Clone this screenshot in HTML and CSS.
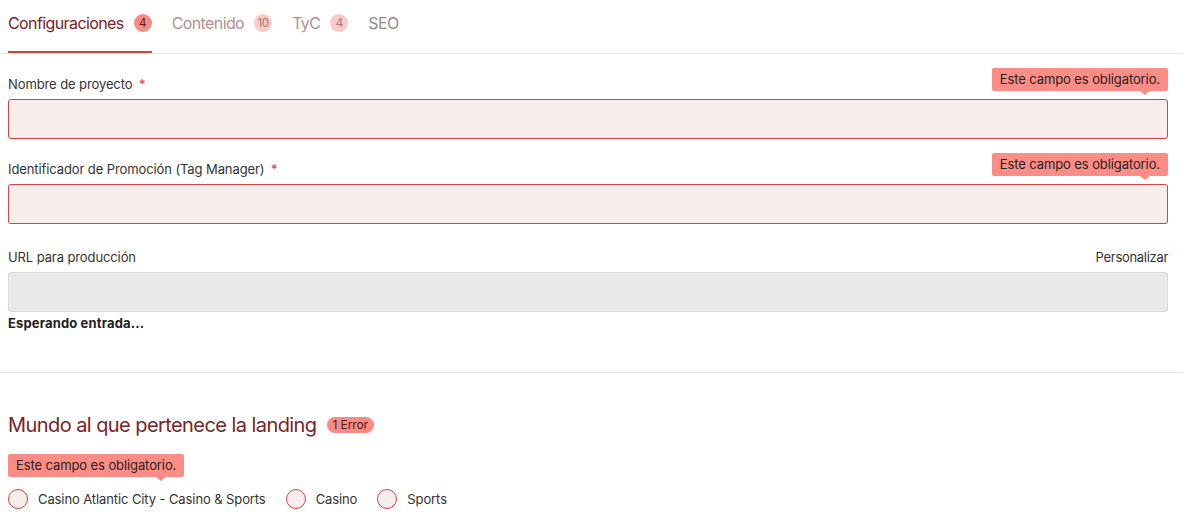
FILE: index.html
```html
<!DOCTYPE html>
<html lang="es">
<head>
<meta charset="utf-8">
<title>Configuraciones</title>
<link rel="stylesheet" href="styles.css">
</head>
<body>
<nav class="tabs">
  <div class="tab active">Configuraciones <span class="badge badge-strong">4</span></div>
  <div class="tab muted">Contenido <span class="badge badge-soft">10</span></div>
  <div class="tab muted">TyC <span class="badge badge-soft">4</span></div>
  <div class="tab grey">SEO</div>
</nav>

<section class="section first">
  <div class="field">
    <div class="field-head">
      <label class="label">Nombre de proyecto <span class="req">*</span></label>
      <span class="tip tip-right">Este campo es obligatorio.</span>
    </div>
    <div class="input error"></div>
  </div>

  <div class="field">
    <div class="field-head">
      <label class="label">Identificador de Promoción (Tag Manager) <span class="req">*</span></label>
      <span class="tip tip-right">Este campo es obligatorio.</span>
    </div>
    <div class="input error"></div>
  </div>

  <div class="field url-field">
    <div class="field-head">
      <label class="label">URL para producción</label>
      <span class="link">Personalizar</span>
    </div>
    <div class="input disabled"></div>
    <div class="hint">Esperando entrada...</div>
  </div>
</section>

<section class="section second">
  <h2 class="heading">Mundo al que pertenece la landing <span class="err-badge">1 Error</span></h2>
  <div class="tip-row"><span class="tip">Este campo es obligatorio.</span></div>
  <div class="radios">
    <label class="radio"><span class="dot"></span>Casino Atlantic City - Casino &amp; Sports</label>
    <label class="radio"><span class="dot"></span>Casino</label>
    <label class="radio"><span class="dot"></span>Sports</label>
  </div>
</section>
</body>
</html>
```

FILE: styles.css
```css
* { box-sizing: border-box; }
html, body { margin: 0; padding: 0; background: #fff; }
body {
  font-family: Inter, "Noto Sans", "Liberation Sans", sans-serif;
  color: #333;
  width: 1183px;
  overflow: hidden;
}

.tabs {
  display: flex;
  gap: 20px;
  padding: 0 8px;
  border-bottom: 1px solid #e4e4e4;
  height: 54px;
}
.tab {
  display: flex;
  align-items: flex-start;
  gap: 10px;
  font-size: 16px;
  line-height: 20px;
  padding-top: 13px;
  height: 53px;
  letter-spacing: -0.6px;
}
.tab.active {
  color: #7a2224;
  border-bottom: 2px solid #d5413f;
}
.tab.muted { color: #b48f8f; }
.tab.grey { color: #8d8d8d; }
.badge {
  width: 18px;
  height: 18px;
  border-radius: 50%;
  font-size: 11.5px;
  line-height: 18px;
  text-align: center;
  margin-top: 1px;
  letter-spacing: -0.3px;
}
.badge-strong { background: #fb8a85; color: #5a1b1b; }
.badge-soft { background: #fdc9c6; color: #9c7a7a; }

.section { padding: 0 15px 0 8px; }
.section.first { padding-top: 14px; padding-bottom: 41px; border-bottom: 1px solid #e4e4e4; }
.section.second { padding-top: 40px; }

.field + .field { margin-top: 14px; }
.field.url-field { margin-top: 17px; }
.field-head {
  display: flex;
  justify-content: space-between;
  align-items: flex-end;
  height: 23px;
  margin-bottom: 8px;
}
.label, .link {
  font-size: 13px;
  line-height: 16px;
  margin-bottom: -1px;
  color: #333;
  letter-spacing: -0.1px;
}
.link { letter-spacing: -0.3px; }
.req { color: #d5413f; margin-left: 3px; }

.tip {
  position: relative;
  display: inline-block;
  background: #fb8c86;
  color: #2b2222;
  font-size: 13px;
  line-height: 23px;
  height: 23px;
  padding: 0 8px;
  border-radius: 2px;
  letter-spacing: -0.1px;
}
.tip::after {
  content: "";
  position: absolute;
  right: 18px;
  bottom: -4px;
  border-left: 5px solid transparent;
  border-right: 5px solid transparent;
  border-top: 4px solid #fb8c86;
}

.input {
  height: 40px;
  border-radius: 3px;
}
.input.error { background: #f8eded; border: 1px solid #d5413f; }
.input.disabled { background: #e8e8e8; border: 1px solid #dcdcdc; }
.hint {
  margin-top: 3px;
  font-size: 13px;
  line-height: 16px;
  font-weight: 700;
  color: #222;
  letter-spacing: 0.15px;
}

.heading {
  margin: 0;
  font-size: 20px;
  line-height: 24px;
  font-weight: 400;
  color: #7a2224;
  display: flex;
  align-items: center;
  gap: 10px;
  letter-spacing: -0.57px;
}
.err-badge {
  background: #fb8a85;
  color: #4a1c1c;
  font-size: 12px;
  line-height: 16px;
  height: 16px;
  padding: 0 6px;
  border-radius: 8px;
  letter-spacing: -0.1px;
}
.tip-row { margin-top: 17px; }
.radios {
  margin-top: 12px;
  display: flex;
  gap: 20px;
}
.radio {
  display: flex;
  align-items: center;
  gap: 10px;
  font-size: 13px;
  line-height: 20px;
  color: #333;
  letter-spacing: -0.1px;
}
.dot {
  width: 20px;
  height: 20px;
  border-radius: 50%;
  border: 1px solid #d5413f;
  background: #f8eded;
}
```
